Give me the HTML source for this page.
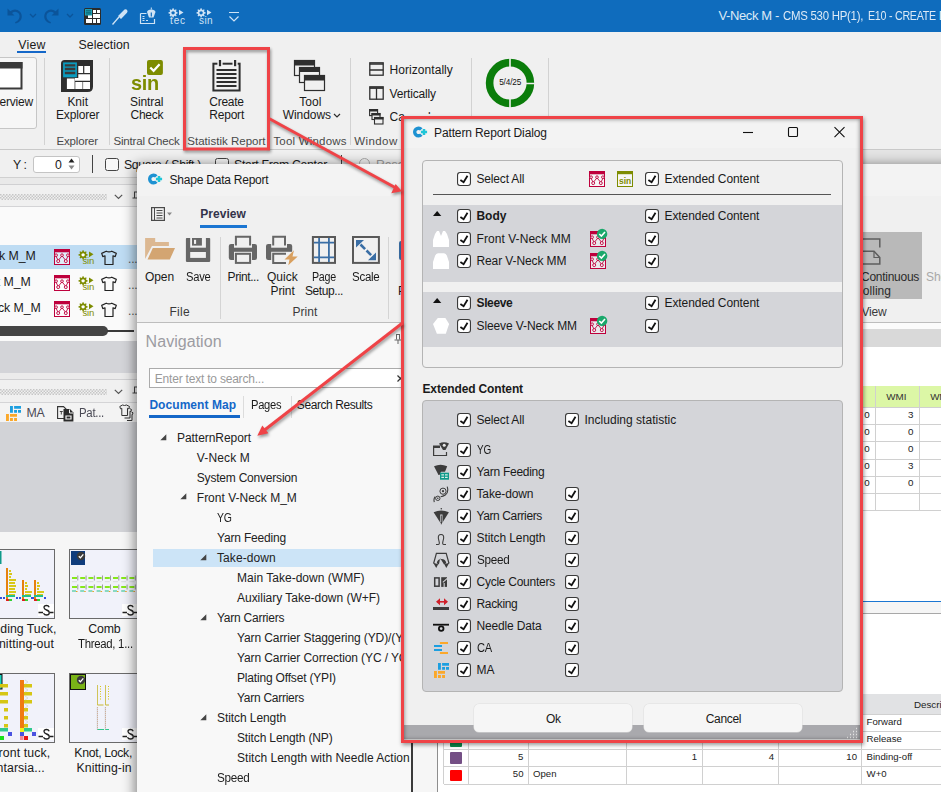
<!DOCTYPE html>
<html><head><meta charset="utf-8"><title>Pattern Report Dialog</title>
<style>
*{box-sizing:border-box;margin:0;padding:0}
html,body{width:941px;height:792px;overflow:hidden;background:#f0f0f0}
body{font-family:"Liberation Sans",sans-serif;font-size:12px;color:#1a1a1a;position:relative;letter-spacing:-0.1px}
.a{position:absolute}
.t{position:absolute;white-space:nowrap;line-height:1}
.c{text-align:center}
.r{text-align:right}
#app{position:absolute;left:0;top:0;width:941px;height:792px;overflow:hidden;background:#f0f0f0}
#sdr{position:absolute;left:137px;top:164px;width:820px;height:640px;background:#f0f0f0;border-radius:8px 0 0 0;box-shadow:-3px 0 12px rgba(0,0,0,.42)}
#sdri{position:absolute;left:0;top:0;width:820px;height:640px;overflow:hidden;border-radius:8px 0 0 0}
#dlg{position:absolute;left:401px;top:116px;width:462px;height:627px;background:#f0f0f0;border:3px solid #ef4347;overflow:hidden;box-shadow:1px 2px 4px rgba(0,0,0,.4)}
#dlg:after{content:'';position:absolute;left:0;top:0;right:0;bottom:0;box-shadow:inset 0 0 4px rgba(0,0,0,.5);pointer-events:none}
</style></head><body>
<svg width="0" height="0" style="position:absolute"><defs>
<symbol id="cb" viewBox="0 0 14 14"><rect x=".55" y=".55" width="12.900" height="12.900" rx="2.500" fill="#fff" stroke="#3a3a3a" stroke-width="1.100"/><path d="M3.400 7.900L6.600 10.200L10.500 3.700" fill="none" stroke="#111" stroke-width="1.800"/></symbol>
<symbol id="logo" viewBox="0 0 15 14"><path d="M8.320 3.460A3.800 3.800 0 1 0 8.320 8.540" fill="none" stroke="#1e92d2" stroke-width="3.400"/><path d="M11 2.900v6.200M7.900 6h6.200" stroke="#1fc6d8" stroke-width="2.500"/></symbol>
<symbol id="knit" viewBox="0 0 16 16"><rect x=".5" y=".5" width="15" height="15" fill="rgba(255,255,255,.5)" stroke="#be003c"/><rect x="0" y="0" width="16" height="3.300" fill="#be003c"/><path d="M1.800 6.800L4.200 11.500L8 6.800L11.800 11.500L14.200 6.800" fill="none" stroke="#be003c" stroke-width=".9"/><g fill="#f6eef0" stroke="#be003c" stroke-width=".9"><circle cx="2.100" cy="6.200" r="1.350"/><circle cx="8" cy="6.200" r="1.350"/><circle cx="13.900" cy="6.200" r="1.350"/><circle cx="4.200" cy="12.100" r="1.500"/><circle cx="11.800" cy="12.100" r="1.500"/></g></symbol>
<symbol id="ma" viewBox="0 0 17 17"><path d="M5 1h2.900v6.800H5zM9.100 1H16v2.800H9.100zM9.100 5H12v2.800H9.100zM13 5h3v2.800h-3z" fill="#1c9fe0"/><path d="M1 9h2.900v6.900H1zM5 9h7v2.700H5zM5 13h2.900v2.900H5zM9.100 13H12v2.900H9.100z" fill="#fba82a"/></symbol>
<symbol id="sinbox" viewBox="0 0 16 16"><rect x=".5" y=".5" width="15" height="15" fill="#f6f6f4" stroke="#7d8c00"/><rect x="0" y="0" width="16" height="3.2" fill="#7d8c00"/></symbol>

<symbol id="gearsin" viewBox="0 0 16 16"><g fill="#7d8c00"><path d="M4.6 0.3l1 0 .3 1.2 1 .4 1-.7.8.8-.7 1 .4 1 1.2.3v1.1l-1.2.3-.4 1 .7 1-.8.8-1-.7-1 .4-.3 1.2h-1l-.3-1.2-1-.4-1 .7-.8-.8.7-1-.4-1L.5 5.4V4.3l1.2-.3.4-1-.7-1 .8-.8 1 .7 1-.4z"/><path d="M11 1.5L15.5 4.3L11 7.2z"/></g><circle cx="5.1" cy="4.85" r="1.7" fill="#fff"/></symbol>
<symbol id="tshirt" viewBox="0 0 16 16"><path d="M5.2 1.2Q8 2.6 10.8 1.2L15.3 3.4L14.2 6.6L12 5.8V14.5H4V5.8L1.8 6.6L0.7 3.4z" fill="none" stroke="#222" stroke-width="1.2" stroke-linejoin="round"/></symbol>
<symbol id="slink" viewBox="0 0 16 12"><rect width="16" height="12" fill="#fff"/><path d="M0.5 8.5H5M12 8.5H15.5" stroke="#222" stroke-width="1.3" fill="none"/><path d="M11.2 3.2Q10.5 1.5 8.5 1.5Q6 1.5 6 3.6Q6 5.3 8.5 6Q11.3 6.8 11.3 8.8Q11.3 11 8.5 11Q6.3 11 5.5 9.2" stroke="#222" stroke-width="1.3" fill="none"/></symbol>

</defs></svg>
<div id="app">
<div class="a" style="left:0px;top:0px;width:941px;height:32px;background:#0f6cbd"></div>
<svg class="a" style="left:5px;top:7px;" width="18" height="18" viewBox="0 0 18 18"><path d="M2.5 1.5V8.5H9.5L7 6Q9.5 4.2 12 5.2Q15 6.6 14.5 10Q14 13.5 10 15.2L10.6 16.6Q16.5 14.5 16.8 10Q17 5 12.5 3Q8.5 1.8 5.3 4.3z" fill="#0b549a"/></svg>
<svg class="a" style="left:29px;top:13px;" width="8" height="6" viewBox="0 0 8 6"><path d="M1 1L4 4L7 1" fill="none" stroke="#0b549a" stroke-width="1.3"/></svg>
<svg class="a" style="left:43px;top:7px;" width="18" height="18" viewBox="0 0 18 18"><path d="M15.5 1.5V8.5H8.5L11 6Q8.500 4.2 6 5.2Q3 6.6 3.5 10Q4 13.5 8 15.2L7.400 16.6Q1.500 14.5 1.2 10Q1 5 5.500 3Q9.500 1.8 12.7 4.3z" fill="#0b549a"/></svg>
<svg class="a" style="left:66px;top:13px;" width="8" height="6" viewBox="0 0 8 6"><path d="M1 1L4 4L7 1" fill="none" stroke="#0b549a" stroke-width="1.3"/></svg>
<svg class="a" style="left:84px;top:8px;" width="17" height="17" viewBox="0 0 17 17"><rect width="17" height="17" rx="1.5" fill="#2b2b2b"/><path d="M9 2h3v3H9zM13 2h3v3h-3zM9 6h7v4H9zM2 11h6v4H2zM9 11h3v4H9zM13 11h3v4h-3zM4 7h4v3H4z" fill="#fff"/><rect x="1" y="1" width="7" height="6.5" fill="#1c9fb5"/><path d="M2 2.7h5M2 4.3h5M2 5.9h5" stroke="#0b5a68" stroke-width=".8"/></svg>
<svg class="a" style="left:111px;top:8px;" width="18" height="18" viewBox="0 0 18 18"><path d="M1.5 16.5L8 9" stroke="#cfe3f5" stroke-width="1.3"/><path d="M7 8L13.5 1.5Q15.5 1 16.2 2.2Q17 3.5 16 4.8L10 11z" fill="#cfe3f5"/></svg>
<svg class="a" style="left:139px;top:7px;" width="18" height="18" viewBox="0 0 18 18"><path d="M1.5 6.5H7.5M1.500 6.5V16.5H15.5V12" fill="none" stroke="#cfe3f5" stroke-width="1.2"/><path d="M3.5 9.5h2M3.5 11.5h2M3.5 13.500h2M7 13.5h2" stroke="#cfe3f5" stroke-width="1"/><path d="M8 5Q8.500 2.5 12.3 2.5Q16 2.5 16.5 5L14.500 10.500H10z" fill="#cfe3f5"/><path d="M12.3 0.500V2.5M12.300 6V9" stroke="#cfe3f5" stroke-width="1"/><path d="M12.3 5.500V9.500" stroke="#0f6cbd" stroke-width="1.2"/></svg>
<svg class="a" style="left:168px;top:8px;" width="18" height="18" viewBox="0 0 18 18"><path d="M4.6 0.3l1 0 .3 1.2 1 .4 1-.7.8.8-.7 1 .4 1 1.2.3v1.1l-1.2.3-.4 1 .7 1-.8.8-1-.7-1 .4-.3 1.2h-1l-.3-1.2-1-.4-1 .7-.8-.8.7-1-.4-1L.5 5.4V4.3l1.2-.3.4-1-.7-1 .8-.8 1 .7 1-.4z" fill="#cfe3f5"/><circle cx="5.1" cy="4.85" r="1.7" fill="#0f6cbd"/><path d="M11 1.8L15.500 4.5L11 7.200z" fill="#cfe3f5"/></svg>
<div class="t" style="left:170px;top:15.79px;letter-spacing:0.89px;color:#cfe3f5;font-size:10px;">tec</div>
<svg class="a" style="left:196px;top:8px;" width="18" height="18" viewBox="0 0 18 18"><path d="M4.6 0.3l1 0 .3 1.2 1 .4 1-.7.8.8-.7 1 .4 1 1.2.3v1.1l-1.2.3-.4 1 .7 1-.8.8-1-.7-1 .4-.3 1.2h-1l-.3-1.2-1-.4-1 .7-.8-.8.7-1-.4-1L.5 5.4V4.3l1.2-.3.4-1-.7-1 .8-.8 1 .7 1-.4z" fill="#cfe3f5"/><circle cx="5.1" cy="4.85" r="1.7" fill="#0f6cbd"/><path d="M11 1.8L15.500 4.5L11 7.200z" fill="#cfe3f5"/></svg>
<div class="t" style="left:199px;top:15.79px;letter-spacing:0.41px;color:#cfe3f5;font-size:10px;">sin</div>
<svg class="a" style="left:228px;top:11px;" width="12" height="12" viewBox="0 0 12 12"><path d="M1 1.500H11M1.500 5.500L6 10L10.500 5.500" fill="none" stroke="#cfe3f5" stroke-width="1.2"/></svg>
<div class="t" style="left:718.4px;top:9.25px;letter-spacing:-0.38px;color:#dce9f6;font-size:13px;">V-Neck M -</div>
<div class="t" style="left:782.5px;top:9.25px;letter-spacing:-0.30px;transform:scaleX(0.879);transform-origin:0 0;color:#dce9f6;font-size:13px;">CMS 530 HP(1),</div>
<div class="t" style="left:867.7px;top:9.25px;letter-spacing:-0.30px;transform:scaleX(0.820);transform-origin:0 0;color:#dce9f6;font-size:13px;">E10 - CREATE</div>
<div class="t" style="left:938.7px;top:9.25px;color:#dce9f6;font-size:13px;">D</div>
<div class="t" style="left:18.3px;top:38.84px;letter-spacing:0.24px;font-size:12.3px;">View</div>
<div class="a" style="left:17px;top:51px;width:29px;height:2px;background:#1467c8"></div>
<div class="t" style="left:78.6px;top:38.84px;letter-spacing:0.06px;font-size:12.3px;">Selection</div>
<div class="a" style="left:0px;top:149px;width:941px;height:1px;background:#c9c9c9"></div>
<div class="a" style="left:-5px;top:57px;width:42px;height:71.5px;border:1px solid #c6c6c6;border-radius:3px;background:#f6f6f6"></div>
<svg class="a" style="left:0px;top:62px;" width="23" height="28" viewBox="0 0 23 28"><path d="M-2 1H21.500V26.500H-2" fill="#fff" stroke="#3a3a3a" stroke-width="2"/><rect x="-2" y="0" width="24.500" height="6.500" fill="#3a3a3a"/></svg>
<div class="t" style="left:-6.37px;top:96.09px;letter-spacing:-0.2px">verview</div>
<div class="a" style="left:44px;top:58px;width:1px;height:87px;background:#d2d2d2"></div>
<div class="a" style="left:109px;top:58px;width:1px;height:87px;background:#d2d2d2"></div>
<div class="a" style="left:350px;top:58px;width:1px;height:87px;background:#d2d2d2"></div>
<div class="a" style="left:471px;top:58px;width:1px;height:87px;background:#d2d2d2"></div>
<div class="a" style="left:548px;top:58px;width:1px;height:87px;background:#d2d2d2"></div>
<svg class="a" style="left:61px;top:59.8px;" width="32" height="32" viewBox="0 0 32 32"><path d="M3.500 0H32V26.500Q32 32 26.500 32H0V3.500Q0 0 3.500 0z" fill="#2e2e2e"/><path d="M17.300 6h4.800v6.900h-4.800zM23.300 6h5.700v6.900h-5.700zM17.300 14.200H29v6.500H13.900V18h3.400zM5.900 18.400h7.700V29H5.900zM14.300 22.100h7.200V29h-7.200zM22.100 22.100H29V29h-6.900z" fill="#fff"/><rect x="2.100" y="2.400" width="13.800" height="14.900" fill="#0b9cc0"/><path d="M3.800 5.300h10.500M3.800 9h10.500M3.800 13h10.500" stroke="#3a3a3a" stroke-width="2.300"/></svg>
<div class="t" style="left:67.4px;top:96.09px;letter-spacing:-0.02px;">Knit</div>
<div class="t" style="left:56px;top:109.09px;letter-spacing:-0.16px;">Explorer</div>
<div class="t" style="left:56.5px;top:135.52px;letter-spacing:-0.17px;color:#484848;font-size:11.5px;">Explorer</div>
<svg class="a" style="left:147.4px;top:59.8px;" width="16" height="15" viewBox="0 0 16 15"><rect width="15.900" height="15" rx="2" fill="#7d8c00"/><path d="M3.300 7.500L6.600 10.800L12.600 4.200" fill="none" stroke="#fff" stroke-width="2.200"/></svg>
<div class="t" style="left:131.2px;top:72.47px;letter-spacing:-0.30px;transform:scaleX(0.948);transform-origin:0 0;font-weight:bold;color:#7d8c00;font-size:21px;">sin</div>
<div class="t" style="left:130px;top:96.09px;letter-spacing:-0.10px;">Sintral</div>
<div class="t" style="left:130.5px;top:109.09px;letter-spacing:-0.24px;">Check</div>
<div class="t" style="left:113.5px;top:135.52px;letter-spacing:-0.18px;color:#484848;font-size:11.5px;">Sintral Check</div>
<svg class="a" style="left:212px;top:59px;" width="30" height="34" viewBox="0 0 30 34"><rect x="1.400" y="4.700" width="26.200" height="26.800" fill="none" stroke="#2e2e2e" stroke-width="2"/><path d="M4.500 10.900H24.500M4.500 14.900H24.500M4.500 19H24.500M4.500 23H24.500M4.500 27H24.500" stroke="#2e2e2e" stroke-width="2"/><rect x="5.400" y="0" width="5.200" height="8.200" fill="#f0f0f0"/><rect x="20.500" y="0" width="5.200" height="8.200" fill="#f0f0f0"/><rect x="6.900" y="1" width="2.200" height="6.200" fill="#2e2e2e"/><rect x="22" y="1" width="2.200" height="6.200" fill="#2e2e2e"/></svg>
<div class="t" style="left:209.3px;top:96.09px;letter-spacing:-0.29px;">Create</div>
<div class="t" style="left:209.3px;top:109.09px;letter-spacing:-0.22px;">Report</div>
<div class="t" style="left:187.3px;top:135.52px;letter-spacing:0.02px;color:#484848;font-size:11.5px;">Statistik Report</div>
<svg class="a" style="left:293px;top:59px;" width="34" height="34" viewBox="0 0 34 34"><g stroke="#2e2e2e" stroke-width="1.200" fill="#f0f0f0"><rect x="1.500" y="1.500" width="20" height="15"/><rect x="6.500" y="8.500" width="20" height="15"/><rect x="11.500" y="16.500" width="20" height="15"/></g><path d="M1 1h21v5.500H1zM6 8h21v5H6zM11 16h21v5.500H11z" fill="#2e2e2e"/></svg>
<div class="t" style="left:299.3px;top:96.09px;letter-spacing:-0.00px;">Tool</div>
<div class="t" style="left:282.7px;top:109.09px;letter-spacing:-0.05px;">Windows</div>
<svg class="a" style="left:333px;top:113px;" width="8" height="6" viewBox="0 0 8 6"><path d="M1 1L4 4L7 1" fill="none" stroke="#2e2e2e" stroke-width="1.200"/></svg>
<div class="t" style="left:273.4px;top:135.52px;letter-spacing:0.20px;color:#484848;font-size:11.5px;">Tool Windows</div>
<svg class="a" style="left:369px;top:62px;" width="15" height="15" viewBox="0 0 15 15"><rect x=".8" y=".8" width="13.400" height="12.400" fill="none" stroke="#2e2e2e" stroke-width="1.300"/><path d="M.8 2h13.400M.8 8h13.400" stroke="#2e2e2e" stroke-width="1.500"/></svg>
<div class="t" style="left:389.6px;top:64.09px;letter-spacing:0.05px;">Horizontally</div>
<svg class="a" style="left:369px;top:86px;" width="15" height="15" viewBox="0 0 15 15"><rect x=".8" y=".8" width="13.400" height="12.400" fill="none" stroke="#2e2e2e" stroke-width="1.300"/><path d="M.8 2h13.400" stroke="#2e2e2e" stroke-width="1.800"/><path d="M7.500 2V13.500" stroke="#2e2e2e" stroke-width="1.300"/></svg>
<div class="t" style="left:389.6px;top:88.09px;letter-spacing:-0.17px;">Vertically</div>
<svg class="a" style="left:369px;top:109px;" width="15" height="17" viewBox="0 0 15 17"><g stroke="#2e2e2e" stroke-width="1.100" fill="#f0f0f0"><rect x=".6" y=".6" width="8" height="6"/><rect x="3" y="4.500" width="8" height="6"/><rect x="5.500" y="8.500" width="8.500" height="6.500"/></g><path d="M0 0h9v2.500H0zM2.500 4h9v2.500h-9zM5 8h9.500v2.500H5z" fill="#2e2e2e"/></svg>
<div class="t" style="left:389.6px;top:111.09px;letter-spacing:0.1px;clip-path:polygon(0 0,100% 0,100% 2.9px,15.5px 2.9px,15.5px 100%,0 100%)">Cascade</div>
<div class="t" style="left:354.3px;top:135.52px;letter-spacing:0.40px;color:#484848;font-size:11.5px;">Window</div>
<svg class="a" style="left:485px;top:58px;" width="50" height="50" viewBox="0 0 50 50"><circle cx="25" cy="25" r="20.400" fill="none" stroke="#0b7d0b" stroke-width="7.600"/><path d="M25 0V10M25 40V50M40 25.500H50" stroke="#f0f0f0" stroke-width="1.600"/></svg>
<div class="t" style="left:499.2px;top:79.31px;letter-spacing:-0.12px;color:#111;font-size:8.2px;">5/4/25</div>
<div class="a" style="left:0px;top:150px;width:941px;height:28px;background:#f0f0f0"></div>
<div class="a" style="left:863px;top:150px;width:80px;height:14px;background:#e4e4e4"></div>
<div class="a" style="left:0px;top:177px;width:941px;height:1px;background:#d0d0d0"></div>
<div class="t" style="left:13px;top:158.84px;letter-spacing:-0.44px;font-size:12.3px;">Y :</div>
<div class="a" style="left:32.5px;top:155.5px;width:47px;height:17px;background:#fff;border:1px solid #c4c4c4;border-radius:3px"></div>
<div class="t" style="left:55px;top:158.84px;font-size:12.3px;">0</div>
<svg class="a" style="left:68px;top:158px;" width="7" height="12" viewBox="0 0 7 12"><path d="M3.500 0.500L6.500 4.500H.5z" fill="#222"/><path d="M3.500 11.500L6.500 7.500H.5z" fill="#8a8a8a"/></svg>
<div class="a" style="left:92px;top:155px;width:1px;height:18px;background:#444"></div>
<div class="a" style="left:105px;top:157.5px;width:14px;height:13.5px;background:#f7f7f7;border:1px solid #444;border-radius:2.500px"></div>
<div class="t" style="left:124px;top:158.84px;letter-spacing:-0.36px;font-size:12.3px;">Square ( Shift )</div>
<div class="a" style="left:215px;top:157.5px;width:14px;height:13.5px;background:#f7f7f7;border:1px solid #444;border-radius:2.500px"></div>
<div class="t" style="left:234px;top:158.84px;letter-spacing:-0.32px;font-size:12.3px;">Start From Center</div>
<div class="a" style="left:341px;top:155px;width:1px;height:18px;background:#444"></div>
<div class="a" style="left:359px;top:158px;width:11px;height:11px;border:1px solid #aaa;border-radius:6px"></div>
<div class="t" style="left:376px;top:158.84px;color:#9a9a9a;font-size:12.3px;">Reset</div>
<div class="a" style="left:0px;top:178px;width:137px;height:7px;background:#e9e9e9"></div>
<div class="a" style="left:0px;top:184px;width:137px;height:1px;background:#d0d0d2"></div>
<div class="a" style="left:0px;top:185px;width:137px;height:22px;background:#f0f0f0"></div>
<div class="a" style="left:0px;top:206px;width:137px;height:1px;background:#d4d4d6"></div>
<svg class="a" style="left:0px;top:194px;" width="107" height="6" viewBox="0 0 107 6"><defs><pattern id="dots" width="3" height="3" patternUnits="userSpaceOnUse"><rect x="0" y="0" width="1.500" height="1.500" fill="#c6c6c6"/></pattern><pattern id="dots2" width="3" height="3" patternUnits="userSpaceOnUse"><rect x="1.500" y="1.500" width="1.500" height="1.500" fill="#c6c6c6"/></pattern></defs><rect width="107" height="6" fill="url(#dots)"/><rect width="107" height="6" fill="url(#dots2)"/></svg>
<svg class="a" style="left:114px;top:194px;" width="9" height="6" viewBox="0 0 9 6"><path d="M0.800 0.800L4.500 4.500L8.200 0.800" fill="none" stroke="#555" stroke-width="1.200"/></svg>
<svg class="a" style="left:132px;top:191px;" width="6" height="12" viewBox="0 0 6 12"><path d="M2 1H6M2.500 1V7M0.500 7H6" fill="none" stroke="#444" stroke-width="1"/></svg>
<div class="a" style="left:0px;top:207px;width:137px;height:134px;background:#fafafa"></div>
<div class="a" style="left:0px;top:245px;width:137px;height:24px;background:#bedcf3"></div>
<div class="t" style="left:-1.0px;top:249.84px;font-size:12.3px;letter-spacing:-0.05px">k M_M</div>
<svg class="a" style="left:54px;top:249px;" width="16" height="16" viewBox="0 0 16 16"><use href="#knit"/></svg>
<svg class="a" style="left:78px;top:250px;" width="16" height="16" viewBox="0 0 16 16"><use href="#gearsin"/></svg>
<div class="t" style="left:82.5px;top:256.21px;letter-spacing:-0.15px;color:#7d8c00;font-size:9.5px;">sin</div>
<svg class="a" style="left:101px;top:250px;" width="16" height="16" viewBox="0 0 16 16"><use href="#tshirt"/></svg>
<div class="t" style="left:128px;top:253.09px;letter-spacing:-0.17px;color:#555;">...</div>
<div class="t" style="left:-3.27px;top:275.84px;font-size:12.3px;letter-spacing:-0.05px">t M_M</div>
<svg class="a" style="left:54px;top:275px;" width="16" height="16" viewBox="0 0 16 16"><use href="#knit"/></svg>
<svg class="a" style="left:78px;top:276px;" width="16" height="16" viewBox="0 0 16 16"><use href="#gearsin"/></svg>
<div class="t" style="left:82.5px;top:282.21px;letter-spacing:-0.15px;color:#7d8c00;font-size:9.5px;">sin</div>
<svg class="a" style="left:101px;top:276px;" width="16" height="16" viewBox="0 0 16 16"><use href="#tshirt"/></svg>
<div class="t" style="left:128px;top:279.09px;letter-spacing:-0.17px;color:#555;">...</div>
<div class="t" style="left:-2.05px;top:301.84px;font-size:12.3px;letter-spacing:-0.05px">ck M_M</div>
<svg class="a" style="left:54px;top:301px;" width="16" height="16" viewBox="0 0 16 16"><use href="#knit"/></svg>
<svg class="a" style="left:78px;top:302px;" width="16" height="16" viewBox="0 0 16 16"><use href="#gearsin"/></svg>
<div class="t" style="left:82.5px;top:308.21px;letter-spacing:-0.15px;color:#7d8c00;font-size:9.5px;">sin</div>
<svg class="a" style="left:101px;top:302px;" width="16" height="16" viewBox="0 0 16 16"><use href="#tshirt"/></svg>
<div class="t" style="left:128px;top:305.09px;letter-spacing:-0.17px;color:#555;">...</div>
<div class="a" style="left:-6px;top:326px;width:114px;height:10px;background:#444;border-radius:5px"></div>
<div class="a" style="left:107px;top:330.3px;width:27px;height:1.6px;background:#3a3a3a"></div>
<div class="a" style="left:0px;top:341px;width:137px;height:33px;background:#d3d4d8"></div>
<div class="a" style="left:0px;top:373px;width:137px;height:7px;background:#ebebeb"></div>
<div class="a" style="left:0px;top:379px;width:137px;height:1px;background:#d0d0d2"></div>
<div class="a" style="left:0px;top:380px;width:137px;height:22px;background:#f0f0f0"></div>
<div class="a" style="left:0px;top:402px;width:137px;height:1px;background:#d4d4d6"></div>
<svg class="a" style="left:0px;top:389px;" width="107" height="6" viewBox="0 0 107 6"><rect width="107" height="6" fill="url(#dots)"/><rect width="107" height="6" fill="url(#dots2)"/></svg>
<svg class="a" style="left:114px;top:389px;" width="9" height="6" viewBox="0 0 9 6"><path d="M0.800 0.800L4.500 4.500L8.200 0.800" fill="none" stroke="#555" stroke-width="1.200"/></svg>
<svg class="a" style="left:132px;top:386px;" width="6" height="12" viewBox="0 0 6 12"><path d="M2 1H6M2.500 1V7M0.500 7H6" fill="none" stroke="#444" stroke-width="1"/></svg>
<div class="a" style="left:0px;top:403px;width:137px;height:19px;background:#f3f3f3"></div>
<svg class="a" style="left:5px;top:404.5px;" width="17" height="17" viewBox="0 0 17 17"><use href="#ma"/></svg>
<div class="t" style="left:26.4px;top:406.84px;letter-spacing:-0.03px;color:#4a4a55;font-size:12.3px;">MA</div>
<svg class="a" style="left:57px;top:405px;" width="17" height="17" viewBox="0 0 17 17"><path d="M0.600 1.600H6.500L9 4V13.500H0.600z" fill="#f3f3f3" stroke="#333" stroke-width="1.100"/><path d="M2.800 6.500h3M4.300 6.500v3" stroke="#333" stroke-width=".9"/><path d="M6.500 4H13L16.400 7.400V16.500H6.500z" fill="#2b2b2b"/><path d="M12.500 4.500V8H16" fill="none" stroke="#f3f3f3" stroke-width="1"/><path d="M9 11h5v3H9z" fill="none" stroke="#f3f3f3" stroke-width="1.200"/></svg>
<div class="t" style="left:78.6px;top:406.84px;letter-spacing:-0.30px;transform:scaleX(0.929);transform-origin:0 0;color:#4a4a55;font-size:12.3px;">Pat...</div>
<svg class="a" style="left:119px;top:404px;" width="16" height="18" viewBox="0 0 16 18"><path d="M3.500 1Q5.500 2 7.500 1L10.500 2.500L9.800 4.800L8.500 4.300V11.500H2.800V4.300L1.500 4.800L0.800 2.500z" fill="#f3f3f3" stroke="#333" stroke-width="1"/><path d="M10.500 4.500L12.500 5.500L12 7.500L11 7.200V14H5.500M12.500 8L14 8.800L13.500 10.500L13 10.300V16.500H8" fill="none" stroke="#333" stroke-width="1"/></svg>
<div class="a" style="left:0px;top:422px;width:137px;height:110px;background:#d2d3d7"></div>
<div class="a" style="left:0px;top:532px;width:137px;height:260px;background:#f6f6f6"></div>
<div class="a" style="left:-15px;top:549px;width:70px;height:70px;background:#f1f2fa;border:1px solid #6a6a6a"></div>
<div class="a" style="left:69px;top:549px;width:70px;height:70px;background:#f1f2fa;border:1px solid #6a6a6a"></div>
<div class="a" style="left:-15px;top:673px;width:70px;height:70px;background:#f1f2fa;border:1px solid #6a6a6a"></div>
<div class="a" style="left:69px;top:673px;width:70px;height:70px;background:#f1f2fa;border:1px solid #6a6a6a"></div>
<svg class="a" style="left:0px;top:540px;" width="56" height="80" viewBox="0 540 56 80"><rect x="6" y="568" width="2" height="31" fill="#e6820e"/><rect x="9" y="570" width="2" height="2" fill="#d8c81a"/><rect x="9" y="573" width="3" height="2" fill="#d8c81a"/><rect x="9" y="576" width="2" height="2" fill="#d8c81a"/><rect x="9" y="579" width="7" height="2" fill="#d8c81a"/><rect x="9" y="582" width="6" height="2" fill="#d8c81a"/><rect x="9" y="585" width="7" height="2" fill="#d8c81a"/><rect x="9" y="588" width="6" height="2" fill="#d8c81a"/><rect x="9" y="591" width="7" height="2" fill="#d8c81a"/><rect x="9" y="594" width="6" height="2" fill="#d8c81a"/><rect x="6" y="595" width="9" height="2" fill="#22c08a"/><rect x="6" y="599" width="3" height="2" fill="#e02020"/><rect x="9" y="599" width="3" height="2" fill="#30d030"/><rect x="16" y="597" width="2" height="2" fill="#3050e0"/><rect x="3" y="597" width="2" height="2" fill="#3050e0"/><rect x="22" y="580" width="2" height="19" fill="#e6820e"/><rect x="25" y="582" width="2" height="2" fill="#d8c81a"/><rect x="25" y="585" width="3" height="2" fill="#d8c81a"/><rect x="25" y="588" width="2" height="2" fill="#d8c81a"/><rect x="25" y="591" width="7" height="2" fill="#d8c81a"/><rect x="25" y="594" width="6" height="2" fill="#d8c81a"/><rect x="22" y="595" width="9" height="2" fill="#22c08a"/><rect x="22" y="599" width="3" height="2" fill="#e02020"/><rect x="25" y="599" width="3" height="2" fill="#30d030"/><rect x="32" y="597" width="2" height="2" fill="#3050e0"/><rect x="19" y="597" width="2" height="2" fill="#3050e0"/><rect x="34" y="580" width="2" height="19" fill="#e6820e"/><rect x="37" y="582" width="2" height="2" fill="#d8c81a"/><rect x="37" y="585" width="3" height="2" fill="#d8c81a"/><rect x="37" y="588" width="2" height="2" fill="#d8c81a"/><rect x="37" y="591" width="7" height="2" fill="#d8c81a"/><rect x="37" y="594" width="6" height="2" fill="#d8c81a"/><rect x="34" y="595" width="9" height="2" fill="#22c08a"/><rect x="34" y="599" width="3" height="2" fill="#e02020"/><rect x="37" y="599" width="3" height="2" fill="#30d030"/><rect x="44" y="597" width="2" height="2" fill="#3050e0"/><rect x="31" y="597" width="2" height="2" fill="#3050e0"/><rect x="0" y="551" width="1.500" height="13" fill="#0f9a8a"/><rect x="0" y="597" width="2" height="2" fill="#3050e0"/></svg>
<svg class="a" style="left:38px;top:604px;" width="16" height="12" viewBox="0 0 16 12"><use href="#slink"/></svg>
<div class="a" style="left:71px;top:551px;width:14px;height:14px;background:#0f3c7c"></div>
<svg class="a" style="left:76px;top:551px;" width="10" height="10" viewBox="0 0 10 10"><circle cx="5" cy="5" r="4.200" fill="#3a3a3a"/><path d="M2.800 5.200L4.400 6.800L7.300 3.300" fill="none" stroke="#fff" stroke-width="1.300"/></svg>
<svg class="a" style="left:70px;top:570px;" width="67" height="30" viewBox="70 570 67 30"><rect x="72.0" y="577" width="5" height="2" fill="#86e81a"/><rect x="77.5" y="575.500" width=".7" height="5" fill="#777"/><rect x="72.0" y="586" width="5" height="2" fill="#86e81a"/><rect x="77.5" y="584.500" width=".7" height="5" fill="#777"/><rect x="72.0" y="590.500" width="4" height="1" fill="#22c08a"/><rect x="76.0" y="591" width="1.500" height="1" fill="#e8a020"/><rect x="72.0" y="581.500" width="5" height=".6" fill="#ccc"/><rect x="80.2" y="577" width="5" height="2" fill="#86e81a"/><rect x="85.7" y="575.500" width=".7" height="5" fill="#777"/><rect x="80.2" y="586" width="5" height="2" fill="#86e81a"/><rect x="85.7" y="584.500" width=".7" height="5" fill="#777"/><rect x="80.2" y="590.500" width="4" height="1" fill="#22c08a"/><rect x="84.2" y="591" width="1.500" height="1" fill="#e8a020"/><rect x="80.2" y="581.500" width="5" height=".6" fill="#ccc"/><rect x="88.4" y="577" width="5" height="2" fill="#86e81a"/><rect x="93.9" y="575.500" width=".7" height="5" fill="#777"/><rect x="88.4" y="586" width="5" height="2" fill="#86e81a"/><rect x="93.9" y="584.500" width=".7" height="5" fill="#777"/><rect x="88.4" y="590.500" width="4" height="1" fill="#22c08a"/><rect x="92.4" y="591" width="1.500" height="1" fill="#e8a020"/><rect x="88.4" y="581.500" width="5" height=".6" fill="#ccc"/><rect x="96.6" y="577" width="5" height="2" fill="#86e81a"/><rect x="102.1" y="575.500" width=".7" height="5" fill="#777"/><rect x="96.6" y="586" width="5" height="2" fill="#86e81a"/><rect x="102.1" y="584.500" width=".7" height="5" fill="#777"/><rect x="96.6" y="590.500" width="4" height="1" fill="#22c08a"/><rect x="100.6" y="591" width="1.500" height="1" fill="#e8a020"/><rect x="96.6" y="581.500" width="5" height=".6" fill="#ccc"/><rect x="104.8" y="577" width="5" height="2" fill="#86e81a"/><rect x="110.3" y="575.500" width=".7" height="5" fill="#777"/><rect x="104.8" y="586" width="5" height="2" fill="#86e81a"/><rect x="110.3" y="584.500" width=".7" height="5" fill="#777"/><rect x="104.8" y="590.500" width="4" height="1" fill="#22c08a"/><rect x="108.8" y="591" width="1.500" height="1" fill="#e8a020"/><rect x="104.8" y="581.500" width="5" height=".6" fill="#ccc"/><rect x="113.0" y="577" width="5" height="2" fill="#86e81a"/><rect x="118.5" y="575.500" width=".7" height="5" fill="#777"/><rect x="113.0" y="586" width="5" height="2" fill="#86e81a"/><rect x="118.5" y="584.500" width=".7" height="5" fill="#777"/><rect x="113.0" y="590.500" width="4" height="1" fill="#22c08a"/><rect x="117.0" y="591" width="1.500" height="1" fill="#e8a020"/><rect x="113.0" y="581.500" width="5" height=".6" fill="#ccc"/><rect x="121.19999999999999" y="577" width="5" height="2" fill="#86e81a"/><rect x="126.69999999999999" y="575.500" width=".7" height="5" fill="#777"/><rect x="121.19999999999999" y="586" width="5" height="2" fill="#86e81a"/><rect x="126.69999999999999" y="584.500" width=".7" height="5" fill="#777"/><rect x="121.19999999999999" y="590.500" width="4" height="1" fill="#22c08a"/><rect x="125.19999999999999" y="591" width="1.500" height="1" fill="#e8a020"/><rect x="121.19999999999999" y="581.500" width="5" height=".6" fill="#ccc"/><rect x="129.39999999999998" y="577" width="5" height="2" fill="#86e81a"/><rect x="134.89999999999998" y="575.500" width=".7" height="5" fill="#777"/><rect x="129.39999999999998" y="586" width="5" height="2" fill="#86e81a"/><rect x="134.89999999999998" y="584.500" width=".7" height="5" fill="#777"/><rect x="129.39999999999998" y="590.500" width="4" height="1" fill="#22c08a"/><rect x="133.39999999999998" y="591" width="1.500" height="1" fill="#e8a020"/><rect x="129.39999999999998" y="581.500" width="5" height=".6" fill="#ccc"/><rect x="137.6" y="577" width="5" height="2" fill="#86e81a"/><rect x="143.1" y="575.500" width=".7" height="5" fill="#777"/><rect x="137.6" y="586" width="5" height="2" fill="#86e81a"/><rect x="143.1" y="584.500" width=".7" height="5" fill="#777"/><rect x="137.6" y="590.500" width="4" height="1" fill="#22c08a"/><rect x="141.6" y="591" width="1.500" height="1" fill="#e8a020"/><rect x="137.6" y="581.500" width="5" height=".6" fill="#ccc"/></svg>
<svg class="a" style="left:122px;top:604px;" width="16" height="12" viewBox="0 0 16 12"><use href="#slink"/></svg>
<div class="t" style="left:-6.51px;top:622.84px;font-size:12.3px;letter-spacing:0">nding Tuck,</div>
<div class="t" style="left:-1.12px;top:637.84px;font-size:12.3px;letter-spacing:0.1px">nitting-out</div>
<div class="t" style="left:88.3px;top:622.84px;letter-spacing:-0.13px;font-size:12.3px;">Comb</div>
<div class="t" style="left:77.6px;top:637.84px;letter-spacing:-0.30px;transform:scaleX(0.924);transform-origin:0 0;font-size:12.3px;">Thread, 1...</div>
<div class="t" style="left:-9.0px;top:746.84px;font-size:12.3px;letter-spacing:0.1px">Front tuck,</div>
<div class="t" style="left:-6.99px;top:761.84px;font-size:12.3px;letter-spacing:0.1px">Intarsia...</div>
<div class="t" style="left:74.3px;top:746.84px;letter-spacing:-0.35px;font-size:12.3px;">Knot, Lock,</div>
<div class="t" style="left:76.6px;top:761.84px;letter-spacing:0.02px;font-size:12.3px;">Knitting-in</div>
<svg class="a" style="left:0px;top:674px;" width="54" height="68" viewBox="0 674 54 68"><rect x="-1" y="674.500" width="3" height="14.500" fill="#19d6c2" stroke="#111" stroke-width="1"/><rect x="20" y="680" width="4" height="48" fill="#f07a12"/><rect x="24" y="684" width="8" height="3.500" fill="#d6c614"/><rect x="24" y="692" width="8" height="3.500" fill="#d6c614"/><rect x="24" y="700" width="8" height="3.500" fill="#d6c614"/><rect x="24" y="708" width="4" height="3.500" fill="#d6c614"/><rect x="24" y="716" width="4" height="3.500" fill="#d6c614"/><rect x="24" y="724" width="4" height="3.500" fill="#d6c614"/><path d="M25 680l3 2l-3 2" fill="none" stroke="#c9c9c9" stroke-width=".6"/><path d="M25 688l3 2l-3 2" fill="none" stroke="#c9c9c9" stroke-width=".6"/><path d="M25 696l3 2l-3 2" fill="none" stroke="#c9c9c9" stroke-width=".6"/><path d="M25 704l3 2l-3 2" fill="none" stroke="#c9c9c9" stroke-width=".6"/><path d="M25 712l3 2l-3 2" fill="none" stroke="#c9c9c9" stroke-width=".6"/><path d="M25 720l3 2l-3 2" fill="none" stroke="#c9c9c9" stroke-width=".6"/><rect x="20" y="728" width="4" height="4" fill="#f2f21a"/><rect x="24" y="728" width="8" height="3.500" fill="#2fc98e"/><rect x="20" y="732" width="4" height="4" fill="#4a52e0"/><rect x="32" y="732" width="4" height="4" fill="#4a52e0"/><rect x="0" y="684" width="8" height="3.500" fill="#d6c614"/><rect x="0" y="692" width="8" height="3.500" fill="#d6c614"/><rect x="0" y="700" width="8" height="3.500" fill="#d6c614"/><rect x="4" y="708" width="4" height="3.500" fill="#d6c614"/><rect x="4" y="716" width="4" height="3.500" fill="#d6c614"/><rect x="4" y="724" width="4" height="3.500" fill="#d6c614"/><rect x="0" y="728" width="8" height="3.500" fill="#2fc98e"/><rect x="8" y="732" width="4" height="4" fill="#4a52e0"/><rect x="0" y="736" width="4" height="4" fill="#18e018"/><rect x="20" y="736" width="3.500" height="4" fill="#f08a9a"/><rect x="24" y="736" width="4" height="4" fill="#e81616"/></svg>
<svg class="a" style="left:38px;top:728px;" width="16" height="12" viewBox="0 0 16 12"><use href="#slink"/></svg>
<div class="a" style="left:70px;top:674px;width:16px;height:16px;background:#7ab317;border:1px solid #111"></div>
<svg class="a" style="left:75.5px;top:675px;" width="10" height="10" viewBox="0 0 10 10"><circle cx="5" cy="5" r="4.200" fill="#3a3a3a"/><path d="M2.800 5.200L4.400 6.800L7.300 3.300" fill="none" stroke="#fff" stroke-width="1.300"/></svg>
<svg class="a" style="left:90px;top:680px;" width="30" height="56" viewBox="90 680 30 56"><path d="M97.5 685V705" stroke="#c8b830" stroke-width=".8"/><path d="M97.5 707V730" stroke="#e8a070" stroke-width=".8" stroke-dasharray="1 1"/><path d="M97.3 707V730" stroke="#aaa" stroke-width=".5"/><path d="M100.5 686V701" stroke="#d6c614" stroke-width="1" stroke-dasharray="1 1.500"/><path d="M105.5 685V705" stroke="#c8b830" stroke-width=".8"/><path d="M105.5 707V730" stroke="#e8a070" stroke-width=".8" stroke-dasharray="1 1"/><path d="M105.3 707V730" stroke="#aaa" stroke-width=".5"/><path d="M108.5 686V701" stroke="#d6c614" stroke-width="1" stroke-dasharray="1 1.500"/><path d="M97.500 705h6M105.500 705h3.500" stroke="#c8b830" stroke-width="1"/><path d="M97.500 729.500h6.500M105.500 729.500h3.500" stroke="#2fc98e" stroke-width="1.200"/></svg>
<svg class="a" style="left:122px;top:728px;" width="16" height="12" viewBox="0 0 16 12"><use href="#slink"/></svg>
</div>
<div id="sdr"><div id="sdri">
<div class="a" style="left:0px;top:0px;width:820px;height:32px;background:#f3f3f3"></div>
<svg class="a" style="left:11px;top:9px;" width="15" height="14" viewBox="0 0 15 14"><use href="#logo"/></svg>
<div class="t" style="left:32.6px;top:10.09px;letter-spacing:-0.23px;">Shape Data Report</div>
<svg class="a" style="left:14px;top:42px;" width="22" height="16" viewBox="0 0 22 16"><rect x=".6" y="1.600" width="12.800" height="12.800" fill="none" stroke="#4a4a4a" stroke-width="1.200"/><path d="M3.500 1.500V14.500" stroke="#4a4a4a" stroke-width="1"/><path d="M5.500 4.500h6M5.500 7h6M5.500 9.500h6M5.500 12h6" stroke="#4a4a4a" stroke-width="1"/><path d="M16 6.500h5L18.500 9.500z" fill="#888"/></svg>
<div class="t" style="left:63.3px;top:44.09px;letter-spacing:0.03px;font-weight:bold;color:#33334a;">Preview</div>
<div class="a" style="left:63px;top:61px;width:46.5px;height:3px;background:#1b76d2"></div>
<svg class="a" style="left:7px;top:74px;" width="32" height="23" viewBox="0 0 32 23"><path d="M1.100 0.100H11.200V4H24.900V8H8L1.100 21z" fill="#dcb892"/><path d="M8.800 10H31L25.800 21.600H3.500z" fill="#d3a572"/></svg>
<div class="t" style="left:8px;top:107.09px;letter-spacing:-0.09px;">Open</div>
<svg class="a" style="left:48px;top:74px;" width="26" height="24" viewBox="0 0 26 24"><rect x=".9" y="0" width="24.300" height="23.900" rx=".8" fill="#666"/><rect x="5.200" y="-1" width="15.700" height="10.700" fill="#f0f0f0"/><rect x="7" y="0" width="9.900" height="7.600" fill="#666"/><rect x="9" y="1.800" width="2.100" height="4.100" fill="#f0f0f0"/><rect x="5.200" y="14" width="15.700" height="5.900" fill="#f0f0f0"/></svg>
<div class="t" style="left:49px;top:107.09px;letter-spacing:-0.30px;transform:scaleX(0.933);transform-origin:0 0;">Save</div>
<div class="a" style="left:83px;top:73px;width:1px;height:82px;background:#d4d4d4"></div>
<div class="a" style="left:251px;top:73px;width:1px;height:82px;background:#d4d4d4"></div>
<svg class="a" style="left:91px;top:71px;" width="30" height="30" viewBox="0 0 30 30"><rect x=".8" y="8.900" width="28.200" height="16.100" rx="2.200" fill="#666"/><rect x="6" y="0" width="18" height="12.700" fill="#f0f0f0"/><path d="M7.900 10.600V1.800H22.100V10.600" fill="none" stroke="#666" stroke-width="2"/><rect x="6" y="16.800" width="18" height="13.200" fill="#f0f0f0"/><rect x="7.900" y="18.800" width="14.200" height="9.100" fill="none" stroke="#666" stroke-width="2"/></svg>
<div class="t" style="left:90.6px;top:107.09px;letter-spacing:-0.42px;">Print...</div>
<svg class="a" style="left:128px;top:71px;" width="34" height="32" viewBox="0 0 34 32"><rect x="1" y="8.900" width="26.200" height="16.100" rx="2.200" fill="#666"/><rect x="6.200" y="0" width="15.800" height="12.700" fill="#f0f0f0"/><path d="M8.200 10.600V1.800H20V10.600" fill="none" stroke="#666" stroke-width="2"/><rect x="6.200" y="16.800" width="22" height="13.200" fill="#f0f0f0"/><path d="M21 18.800H8.200V27.900H21" fill="none" stroke="#666" stroke-width="2"/><path d="M29 15.300L19.500 24.400L24.500 24.600L23.300 30.200L32.700 21.600L27.500 21.400z" fill="#d9a05f" stroke="#f0f0f0" stroke-width="1" paint-order="stroke"/></svg>
<div class="t" style="left:130px;top:107.09px;letter-spacing:-0.01px;">Quick</div>
<div class="t" style="left:133.5px;top:121.09px;letter-spacing:-0.11px;">Print</div>
<svg class="a" style="left:174px;top:71px;" width="26" height="30" viewBox="0 0 26 30"><rect x="1.900" y="2" width="22.100" height="25.900" fill="#f0f0f0" stroke="#595959" stroke-width="2"/><path d="M8.100 3V27M17.900 3V27M3 7.600H23M3 22.300H23" stroke="#3a6ea5" stroke-width="1.800"/></svg>
<div class="t" style="left:175.1px;top:107.09px;letter-spacing:-0.30px;transform:scaleX(0.891);transform-origin:0 0;">Page</div>
<div class="t" style="left:168px;top:121.09px;letter-spacing:-0.42px;">Setup...</div>
<svg class="a" style="left:214px;top:71px;" width="30" height="30" viewBox="0 0 30 30"><rect x="2" y="2" width="25.900" height="25.900" fill="#f0f0f0" stroke="#595959" stroke-width="2"/><path d="M9.500 9.500L20.500 20.500" stroke="#3a6ea5" stroke-width="2.600" stroke-dasharray="6.500 2"/><path d="M5 5H13L5 12.400zM25 25.200V17.500L17 25.200z" fill="#3a6ea5"/></svg>
<div class="t" style="left:215px;top:107.09px;letter-spacing:-0.30px;transform:scaleX(0.961);transform-origin:0 0;">Scale</div>
<div class="a" style="left:262px;top:76.5px;width:10px;height:19.3px;background:#3a6ea5;border-radius:2px"></div>
<div class="t" style="left:261px;top:121.09px;">P</div>
<div class="t" style="left:32.5px;top:142.09px;letter-spacing:0.29px;color:#3a3a3a;">File</div>
<div class="t" style="left:155.5px;top:142.09px;letter-spacing:0.06px;color:#3a3a3a;">Print</div>
<div class="a" style="left:724px;top:67.5px;width:61px;height:67.5px;background:#b9b9b9"></div>
<svg class="a" style="left:726px;top:73px;" width="20" height="29" viewBox="0 0 20 29"><path d="M0 2H16.800V10.400M0 14.200H11L16.800 20.500V26.900H0" fill="none" stroke="#5e5e5e" stroke-width="1.500"/><path d="M11 14.200V20.500H16.800" fill="none" stroke="#5e5e5e" stroke-width="1.200"/></svg>
<div class="t" style="left:724px;top:107.09px;letter-spacing:-0.27px;color:#2a2a2a;">Continuous</div>
<div class="t" style="left:725.8px;top:121.09px;letter-spacing:0.03px;color:#2a2a2a;">olling</div>
<div class="t" style="left:789px;top:107.09px;color:#a8a8a8;">Sho</div>
<div class="t" style="left:724.5px;top:142.09px;letter-spacing:-0.20px;color:#3a3a3a;">View</div>
<div class="a" style="left:0px;top:158px;width:820px;height:1px;background:#bdbdbd"></div>
<div class="a" style="left:0px;top:159px;width:820px;height:480px;background:#f8f8f8"></div>
<div class="t" style="left:8.6px;top:169.71px;letter-spacing:0.04px;color:#9c9ca2;font-size:16px;">Navigation</div>
<svg class="a" style="left:257px;top:170px;" width="8" height="11" viewBox="0 0 8 11"><path d="M2 0.500H6M2.500 0.500V5.500M5.500 0.500V5.500M0.500 6H7.500M4 6V10" fill="none" stroke="#666" stroke-width="1"/></svg>
<div class="a" style="left:12px;top:203.7px;width:262px;height:20.6px;background:#fff;border:1px solid #ababab"></div>
<div class="t" style="left:17.8px;top:209.09px;letter-spacing:-0.21px;color:#9a9a9a;">Enter text to search...</div>
<svg class="a" style="left:259.5px;top:211px;" width="7" height="7" viewBox="0 0 7 7"><path d="M0.500 0.500L6.500 6.500M6.500 0.500L0.500 6.500" stroke="#333" stroke-width="1.200"/></svg>
<div class="t" style="left:12.4px;top:235.09px;letter-spacing:0.06px;font-weight:bold;color:#1467c8;">Document Map</div>
<div class="a" style="left:12px;top:251px;width:91px;height:3px;background:#1467c8"></div>
<div class="a" style="left:106px;top:232px;width:1px;height:22px;background:#dcdcdc"></div>
<div class="t" style="left:113.5px;top:235.09px;letter-spacing:-0.30px;transform:scaleX(0.932);transform-origin:0 0;">Pages</div>
<div class="a" style="left:153.5px;top:232px;width:1px;height:22px;background:#dcdcdc"></div>
<div class="t" style="left:159.8px;top:235.09px;letter-spacing:-0.42px;">Search Results</div>
<div class="a" style="left:15.6px;top:384.5px;width:270px;height:18.2px;background:#cce4f7"></div>
<div class="t" style="left:40px;top:268.09px;letter-spacing:-0.05px;color:#222;">PatternReport</div>
<svg class="a" style="left:23.3px;top:269.6px;" width="7" height="7" viewBox="0 0 7 7"><path d="M6.300 0.300V6.300H0.300z" fill="#444"/></svg>
<div class="t" style="left:59.8px;top:288.09px;letter-spacing:0.14px;color:#222;">V-Neck M</div>
<div class="t" style="left:59.8px;top:308.09px;letter-spacing:-0.21px;color:#222;">System Conversion</div>
<div class="t" style="left:59.8px;top:328.09px;letter-spacing:0.00px;color:#222;">Front V-Neck M_M</div>
<svg class="a" style="left:43.3px;top:329.4px;" width="7" height="7" viewBox="0 0 7 7"><path d="M6.300 0.300V6.300H0.300z" fill="#444"/></svg>
<div class="t" style="left:80px;top:348.09px;letter-spacing:-0.30px;transform:scaleX(0.872);transform-origin:0 0;color:#222;">YG</div>
<div class="t" style="left:80px;top:368.09px;letter-spacing:-0.18px;color:#222;">Yarn Feeding</div>
<div class="t" style="left:80px;top:388.09px;letter-spacing:0.07px;color:#222;">Take-down</div>
<svg class="a" style="left:63.3px;top:389.5px;" width="7" height="7" viewBox="0 0 7 7"><path d="M6.300 0.300V6.300H0.300z" fill="#444"/></svg>
<div class="t" style="left:100px;top:408.09px;letter-spacing:0.02px;color:#222;">Main Take-down (WMF)</div>
<div class="t" style="left:100px;top:428.09px;letter-spacing:-0.02px;color:#222;">Auxiliary Take-down (W+F)</div>
<div class="t" style="left:80px;top:448.09px;letter-spacing:-0.25px;color:#222;">Yarn Carriers</div>
<svg class="a" style="left:63.3px;top:449.5px;" width="7" height="7" viewBox="0 0 7 7"><path d="M6.300 0.300V6.300H0.300z" fill="#444"/></svg>
<div class="t" style="left:100px;top:468.09px;color:#222;">Yarn Carrier Staggering (YD)/(YDI)</div>
<div class="t" style="left:100px;top:488.09px;color:#222;">Yarn Carrier Correction (YC / YCI)</div>
<div class="t" style="left:100px;top:508.09px;letter-spacing:-0.18px;color:#222;">Plating Offset (YPI)</div>
<div class="t" style="left:100px;top:528.09px;letter-spacing:-0.27px;color:#222;">Yarn Carriers</div>
<div class="t" style="left:80px;top:548.09px;letter-spacing:-0.08px;color:#222;">Stitch Length</div>
<svg class="a" style="left:63.3px;top:549.5px;" width="7" height="7" viewBox="0 0 7 7"><path d="M6.300 0.300V6.300H0.300z" fill="#444"/></svg>
<div class="t" style="left:100px;top:568.09px;letter-spacing:-0.14px;color:#222;">Stitch Length (NP)</div>
<div class="t" style="left:100px;top:588.09px;letter-spacing:0.02px;color:#222;">Stitch Length with Needle Action</div>
<div class="t" style="left:80px;top:608.09px;letter-spacing:-0.30px;transform:scaleX(0.976);transform-origin:0 0;color:#222;">Speed</div>
<div class="a" style="left:274px;top:159px;width:2px;height:480px;background:#3a3a3a"></div>
<div class="a" style="left:276px;top:159px;width:600px;height:480px;background:#f6f6f6"></div>
<div class="a" style="left:300px;top:159px;width:1px;height:480px;background:#8e8e8e"></div>
<div class="a" style="left:301px;top:159px;width:600px;height:480px;background:#fff"></div>
<div class="a" style="left:723px;top:159px;width:100px;height:6px;background:#fbfbfb"></div>
<div class="a" style="left:723px;top:165px;width:100px;height:18.5px;background:#d9d9d9"></div>
<div class="a" style="left:723px;top:183px;width:100px;height:39px;background:#fff"></div>
<div class="a" style="left:723px;top:222px;width:100px;height:20.5px;background:#dcf7a6"></div>
<div class="a" style="left:737.5px;top:222px;width:1px;height:124.5px;background:#d0d0d0"></div>
<div class="a" style="left:781.5px;top:222px;width:1px;height:124.5px;background:#d0d0d0"></div>
<div class="a" style="left:723px;top:242.5px;width:100px;height:1px;background:#d0d0d0"></div>
<div class="a" style="left:723px;top:260px;width:100px;height:1px;background:#d0d0d0"></div>
<div class="a" style="left:723px;top:277.3px;width:100px;height:1px;background:#d0d0d0"></div>
<div class="a" style="left:723px;top:294.5px;width:100px;height:1px;background:#d0d0d0"></div>
<div class="a" style="left:723px;top:311.8px;width:100px;height:1px;background:#d0d0d0"></div>
<div class="a" style="left:723px;top:329px;width:100px;height:1px;background:#d0d0d0"></div>
<div class="a" style="left:723px;top:346.2px;width:100px;height:1px;background:#d0d0d0"></div>
<div class="t" style="left:749.3px;top:227.95px;letter-spacing:0.02px;color:#333;font-size:9.8px;">WMI</div>
<div class="t" style="left:793.2px;top:227.95px;color:#333;font-size:9.8px;">WM</div>
<div class="t" style="left:770.95px;top:245.95px;color:#222;font-size:9.8px;letter-spacing:0">3</div>
<div class="t" style="left:727.3px;top:245.95px;color:#222;font-size:9.8px;letter-spacing:0">0</div>
<div class="t" style="left:770.95px;top:262.95px;color:#222;font-size:9.8px;letter-spacing:0">0</div>
<div class="t" style="left:727.3px;top:262.95px;color:#222;font-size:9.8px;letter-spacing:0">0</div>
<div class="t" style="left:770.95px;top:279.95px;color:#222;font-size:9.8px;letter-spacing:0">0</div>
<div class="t" style="left:727.3px;top:279.95px;color:#222;font-size:9.8px;letter-spacing:0">0</div>
<div class="t" style="left:770.95px;top:296.95px;color:#222;font-size:9.8px;letter-spacing:0">3</div>
<div class="t" style="left:727.3px;top:296.95px;color:#222;font-size:9.8px;letter-spacing:0">0</div>
<div class="t" style="left:770.95px;top:313.95px;color:#222;font-size:9.8px;letter-spacing:0">0</div>
<div class="t" style="left:727.3px;top:313.95px;color:#222;font-size:9.8px;letter-spacing:0">0</div>
<div class="a" style="left:723px;top:437px;width:100px;height:1px;background:#1b76d2"></div>
<div class="a" style="left:723px;top:438px;width:100px;height:10.5px;background:#f5f5f5"></div>
<div class="a" style="left:723px;top:448.5px;width:100px;height:1px;background:#a8a8a8"></div>
<div class="a" style="left:724.5px;top:529.5px;width:100px;height:20.5px;background:#e1e2e4"></div>
<div class="t" style="left:776.9px;top:535.95px;color:#222;font-size:9.8px;letter-spacing:0">Descrip</div>
<div class="a" style="left:306.5px;top:550px;width:520px;height:1px;background:#d0d0d0"></div>
<div class="a" style="left:306.5px;top:567px;width:520px;height:1px;background:#d0d0d0"></div>
<div class="a" style="left:306.5px;top:584.7px;width:520px;height:1px;background:#d0d0d0"></div>
<div class="a" style="left:306.5px;top:602.2px;width:520px;height:1px;background:#d0d0d0"></div>
<div class="a" style="left:306.5px;top:619.5px;width:520px;height:1px;background:#d0d0d0"></div>
<div class="a" style="left:306px;top:536px;width:1px;height:83.5px;background:#d0d0d0"></div>
<div class="a" style="left:331px;top:536px;width:1px;height:83.5px;background:#d0d0d0"></div>
<div class="a" style="left:391px;top:536px;width:1px;height:83.5px;background:#d0d0d0"></div>
<div class="a" style="left:489px;top:536px;width:1px;height:83.5px;background:#d0d0d0"></div>
<div class="a" style="left:564.5px;top:536px;width:1px;height:83.5px;background:#d0d0d0"></div>
<div class="a" style="left:641px;top:536px;width:1px;height:83.5px;background:#d0d0d0"></div>
<div class="a" style="left:724px;top:536px;width:1px;height:83.5px;background:#d0d0d0"></div>
<div class="t" style="left:729.6px;top:553.12px;color:#222;font-size:9.6px;letter-spacing:0">Forward</div>
<div class="t" style="left:729.6px;top:570.12px;color:#222;font-size:9.6px;letter-spacing:0">Release</div>
<div class="t" style="left:729.6px;top:588.12px;color:#222;font-size:9.6px;letter-spacing:0">Binding-off</div>
<div class="t" style="left:729.6px;top:605.12px;color:#222;font-size:9.6px;letter-spacing:0">W+0</div>
<div class="a" style="left:313px;top:571px;width:12px;height:12px;background:#0b8a4a;border-radius:1px"></div>
<div class="a" style="left:313px;top:588.3px;width:12px;height:12px;background:#744f85;border-radius:1px"></div>
<div class="a" style="left:313px;top:605.7px;width:12px;height:11.5px;background:#ff0000;border-radius:1px"></div>
<div class="t" style="left:381.06px;top:588.12px;color:#222;font-size:9.6px;letter-spacing:0">5</div>
<div class="t" style="left:375.82px;top:605.12px;color:#222;font-size:9.6px;letter-spacing:0">50</div>
<div class="t" style="left:396px;top:605.12px;color:#222;font-size:9.6px;letter-spacing:0">Open</div>
<div class="t" style="left:554.76px;top:588.12px;color:#222;font-size:9.6px;letter-spacing:0">1</div>
<div class="t" style="left:631.76px;top:588.12px;color:#222;font-size:9.6px;letter-spacing:0">4</div>
<div class="t" style="left:709.32px;top:588.12px;color:#222;font-size:9.6px;letter-spacing:0">10</div>
</div></div>
<div id="dlg">
<div class="a" style="left:0;top:0;width:456px;height:29px;background:#f3f3f3"></div>
<svg class="a" style="left:9px;top:7px" width="15" height="14" viewBox="0 0 15 14"><use href="#logo"/></svg>
<div class="t" style="left:30px;top:8.09px;letter-spacing:-0.12px;">Pattern Report Dialog</div>
<svg class="a" style="left:336px;top:5px" width="110" height="18" viewBox="0 0 110 18"><path d="M3 8.5h10" stroke="#111" stroke-width="1.1" fill="none"/><rect x="48.5" y="3.5" width="9" height="9" rx="1" fill="none" stroke="#111" stroke-width="1.1"/><path d="M94.5 3.2l10 10M104.5 3.2l-10 10" stroke="#111" stroke-width="1.1" fill="none"/></svg>
<div class="a" style="left:18px;top:41px;width:421px;height:208px;border:1px solid #b4b4b4;border-radius:4px;background:#f0f0f0"></div>
<svg class="a" style="left:53px;top:53px" width="14" height="14"><use href="#cb"/></svg>
<div class="t" style="left:72.5px;top:54.09px;letter-spacing:-0.17px;">Select All</div>
<svg class="a" style="left:185px;top:52px" width="16" height="16" viewBox="0 0 16 16"><use href="#knit"/></svg>
<svg class="a" style="left:213px;top:52px" width="16" height="16" viewBox="0 0 16 16"><use href="#sinbox"/><text x="8" y="13" font-size="9.5" font-family="Liberation Sans, sans-serif" fill="#7d8c00" text-anchor="middle" font-weight="bold" textLength="12" lengthAdjust="spacingAndGlyphs">sin</text></svg>
<svg class="a" style="left:241px;top:53px" width="14" height="14"><use href="#cb"/></svg>
<div class="t" style="left:260.5px;top:54.09px;letter-spacing:-0.08px;">Extended Content</div>
<div class="a" style="left:29px;top:75px;width:398px;height:1px;background:#555"></div>
<div class="a" style="left:19px;top:86px;width:419px;height:76.5px;background:#d4d5d9"></div>
<div class="a" style="left:19px;top:173px;width:419px;height:54.5px;background:#d4d5d9"></div>
<svg class="a" style="left:28.899999999999977px;top:92px" width="9" height="6" viewBox="0 0 9 6"><path d="M4.150 0L8.300 4.900H0z" fill="#111"/></svg>
<svg class="a" style="left:28.899999999999977px;top:179px" width="9" height="6" viewBox="0 0 9 6"><path d="M4.150 0L8.300 4.900H0z" fill="#111"/></svg>
<svg class="a" style="left:53px;top:90px" width="14" height="14"><use href="#cb"/></svg>
<div class="t" style="left:72.5px;top:91.09px;letter-spacing:-0.05px;font-weight:bold;">Body</div>
<svg class="a" style="left:241px;top:90px" width="14" height="14"><use href="#cb"/></svg>
<div class="t" style="left:260.5px;top:91.09px;letter-spacing:-0.08px;">Extended Content</div>
<svg class="a" style="left:53px;top:113px" width="14" height="14"><use href="#cb"/></svg>
<div class="t" style="left:72.5px;top:114.09px;letter-spacing:0.06px;">Front V-Neck MM</div>
<svg class="a" style="left:241px;top:113px" width="14" height="14"><use href="#cb"/></svg>
<svg class="a" style="left:29px;top:112px" width="16" height="16" viewBox="0 0 16 16"><path d="M0 16V9L2 3L4 0H6L8 5L10 0H12L14 3L16 9V16z" fill="#fff"/></svg>
<svg class="a" style="left:186px;top:109px" width="19" height="19" viewBox="0 0 19 19"><use href="#knit" x="0" y="3" width="16" height="16"/><circle cx="12.1" cy="5.9" r="5.2" fill="#1aa86b"/><path d="M9.3 6L11.4 8.1L15 4" fill="none" stroke="#fff" stroke-width="1.6"/></svg>
<svg class="a" style="left:53px;top:135px" width="14" height="14"><use href="#cb"/></svg>
<div class="t" style="left:72.5px;top:136.09px;letter-spacing:-0.11px;">Rear V-Neck MM</div>
<svg class="a" style="left:241px;top:135px" width="14" height="14"><use href="#cb"/></svg>
<svg class="a" style="left:29px;top:134px" width="16" height="16" viewBox="0 0 16 16"><path d="M0 16V9L2 3Q3 0.3 5 0.3H11Q13 0.3 14 3L16 9V16z" fill="#fff"/></svg>
<svg class="a" style="left:186px;top:131px" width="19" height="19" viewBox="0 0 19 19"><use href="#knit" x="0" y="3" width="16" height="16"/><circle cx="12.1" cy="5.9" r="5.2" fill="#1aa86b"/><path d="M9.3 6L11.4 8.1L15 4" fill="none" stroke="#fff" stroke-width="1.6"/></svg>
<svg class="a" style="left:53px;top:177px" width="14" height="14"><use href="#cb"/></svg>
<div class="t" style="left:72.5px;top:178.09px;letter-spacing:-0.37px;font-weight:bold;">Sleeve</div>
<svg class="a" style="left:241px;top:177px" width="14" height="14"><use href="#cb"/></svg>
<div class="t" style="left:260.5px;top:178.09px;letter-spacing:-0.08px;">Extended Content</div>
<svg class="a" style="left:53px;top:200px" width="14" height="14"><use href="#cb"/></svg>
<div class="t" style="left:72.5px;top:201.09px;letter-spacing:-0.10px;">Sleeve V-Neck MM</div>
<svg class="a" style="left:241px;top:200px" width="14" height="14"><use href="#cb"/></svg>
<svg class="a" style="left:29px;top:199px" width="16" height="16" viewBox="0 0 16 16"><path d="M4.800 0H12.400L16.100 6L12.800 15.800H3.900L0 6z" fill="#fff"/></svg>
<svg class="a" style="left:186px;top:196px" width="19" height="19" viewBox="0 0 19 19"><use href="#knit" x="0" y="3" width="16" height="16"/><circle cx="12.1" cy="5.9" r="5.2" fill="#1aa86b"/><path d="M9.3 6L11.4 8.1L15 4" fill="none" stroke="#fff" stroke-width="1.6"/></svg>
<div class="t" style="left:18.5px;top:264.09px;letter-spacing:-0.14px;font-weight:bold;">Extended Content</div>
<div class="a" style="left:18px;top:281px;width:421px;height:292px;border:1px solid #b4b4b4;border-radius:4px;background:#d4d5d9"></div>
<svg class="a" style="left:53px;top:294px" width="14" height="14"><use href="#cb"/></svg>
<div class="t" style="left:72.5px;top:295.09px;letter-spacing:-0.17px;">Select All</div>
<svg class="a" style="left:161px;top:294px" width="14" height="14"><use href="#cb"/></svg>
<div class="t" style="left:180.5px;top:295.09px;letter-spacing:0.02px;">Including statistic</div>
<svg class="a" style="left:29px;top:323px" width="17" height="17" viewBox="0 0 17 17"><path d="M0.600 4.500V13.500H13.500V10" fill="none" stroke="#3c3c3c" stroke-width="1.200"/><path d="M0 3.500H7V6H0z" fill="#3c3c3c"/><path d="M6 1.500Q11 -1 16 1.500L12.500 8H10z" fill="#3c3c3c"/><circle cx="11.200" cy="3.200" r="1.500" fill="#e8e8e8"/></svg>
<svg class="a" style="left:53px;top:324px" width="14" height="14"><use href="#cb"/></svg>
<div class="t" style="left:72.5px;top:325.09px;letter-spacing:-0.30px;transform:scaleX(0.830);transform-origin:0 0;">YG</div>
<svg class="a" style="left:29px;top:345px" width="17" height="17" viewBox="0 0 17 17"><path d="M1 2.300Q7.600 -1 14.200 2.300L12 7.800H8L6.500 11H5.500z" fill="#3c3c3c"/><rect x="7" y="8.700" width="9" height="7" fill="#0f9a8a"/><path d="M8.300 10.200h2.700v1.400h-2.700zM12 10.200h2.700v1.400h-2.700zM8.300 12.700h2.700v1.400h-2.700zM12 12.700h2.700v1.400h-2.700z" fill="#d8efe9"/></svg>
<svg class="a" style="left:53px;top:346px" width="14" height="14"><use href="#cb"/></svg>
<div class="t" style="left:72.5px;top:347.09px;letter-spacing:-0.27px;">Yarn Feeding</div>
<svg class="a" style="left:29px;top:367px" width="17" height="17" viewBox="0 0 17 17"><circle cx="10" cy="5.200" r="3.100" fill="none" stroke="#3c3c3c" stroke-width="1"/><circle cx="10" cy="5.200" r="1.100" fill="#3c3c3c"/><circle cx="4.800" cy="12.300" r="2.200" fill="none" stroke="#3c3c3c" stroke-width="1"/><circle cx="4.800" cy="12.300" r=".8" fill="#3c3c3c"/><path d="M14.200 0.600Q16 6.500 12.300 9Q10 10.300 7.600 10.800M2.200 10.600Q0.300 13 1.300 16.200" fill="none" stroke="#3c3c3c" stroke-width="1.100"/></svg>
<svg class="a" style="left:53px;top:368px" width="14" height="14"><use href="#cb"/></svg>
<div class="t" style="left:72.5px;top:369.09px;letter-spacing:-0.13px;">Take-down</div>
<svg class="a" style="left:161px;top:368px" width="14" height="14"><use href="#cb"/></svg>
<svg class="a" style="left:29px;top:389px" width="17" height="17" viewBox="0 0 17 17"><circle cx="8.300" cy="0.800" r=".8" fill="#3c3c3c"/><path d="M0.600 4.300Q8.300 0.600 15.900 4.300L10.300 13.200L8.400 15.600L6.400 13.200z" fill="#3c3c3c"/><rect x="7.200" y="6.500" width="2.300" height="7.500" fill="#d4d5d9"/><path d="M8.350 7.500V16.300" stroke="#3c3c3c" stroke-width=".9"/></svg>
<svg class="a" style="left:53px;top:390px" width="14" height="14"><use href="#cb"/></svg>
<div class="t" style="left:72.5px;top:391.09px;letter-spacing:-0.39px;">Yarn Carriers</div>
<svg class="a" style="left:161px;top:390px" width="14" height="14"><use href="#cb"/></svg>
<svg class="a" style="left:29px;top:411px" width="17" height="17" viewBox="0 0 17 17"><path d="M3 14.500H5.200Q6.500 14.500 6.300 12.500L5.400 8.500Q4.800 4.500 8 4.500Q11.200 4.500 10.600 8.500L9.700 12.500Q9.500 14.500 10.800 14.500H13" fill="none" stroke="#3c3c3c" stroke-width="1.100"/></svg>
<svg class="a" style="left:53px;top:412px" width="14" height="14"><use href="#cb"/></svg>
<div class="t" style="left:72.5px;top:413.09px;letter-spacing:-0.09px;">Stitch Length</div>
<svg class="a" style="left:161px;top:412px" width="14" height="14"><use href="#cb"/></svg>
<svg class="a" style="left:29px;top:433px" width="17" height="17" viewBox="0 0 17 17"><path d="M0.600 11.500L3.400 1.400H13.200L16 11.500" fill="none" stroke="#3c3c3c" stroke-width="1.200"/><path d="M0.200 10.800L5.200 12.300L3.200 15.900zM16.300 10.800L11.300 12.300L13.300 15.900z" fill="#3c3c3c"/><path d="M3.700 11.200A4.900 5.200 0 0 1 13.300 11.200L11 12.600L7.200 6.300L5.900 12.600z" fill="#3c3c3c"/></svg>
<svg class="a" style="left:53px;top:434px" width="14" height="14"><use href="#cb"/></svg>
<div class="t" style="left:72.5px;top:435.09px;letter-spacing:-0.30px;transform:scaleX(0.976);transform-origin:0 0;">Speed</div>
<svg class="a" style="left:161px;top:434px" width="14" height="14"><use href="#cb"/></svg>
<svg class="a" style="left:29px;top:455px" width="17" height="17" viewBox="0 0 17 17"><rect x="1.700" y="3.900" width="4.400" height="8.300" fill="none" stroke="#3c3c3c" stroke-width="1.500"/><rect x="8.200" y="3.200" width="5.800" height="9.700" fill="#3c3c3c"/><path d="M14.300 4.300L9.800 8.300" stroke="#d4d5d9" stroke-width="1.100"/><rect x="10.600" y="9" width="1.100" height="4" fill="#d4d5d9"/></svg>
<svg class="a" style="left:53px;top:456px" width="14" height="14"><use href="#cb"/></svg>
<div class="t" style="left:72.5px;top:457.09px;letter-spacing:-0.26px;">Cycle Counters</div>
<svg class="a" style="left:161px;top:456px" width="14" height="14"><use href="#cb"/></svg>
<svg class="a" style="left:29px;top:477px" width="17" height="17" viewBox="0 0 17 17"><path d="M4 5.800H14" stroke="#d0202a" stroke-width="1.600"/><path d="M3 5.800L7 2.300V9.300zM15 5.800L11 2.300V9.300z" fill="#d0202a"/><rect x="0" y="11" width="16" height="3" fill="#3c3c3c"/></svg>
<svg class="a" style="left:53px;top:478px" width="14" height="14"><use href="#cb"/></svg>
<div class="t" style="left:72.5px;top:479.09px;letter-spacing:-0.35px;">Racking</div>
<svg class="a" style="left:161px;top:478px" width="14" height="14"><use href="#cb"/></svg>
<svg class="a" style="left:29px;top:499px" width="17" height="17" viewBox="0 0 17 17"><rect x="0" y="5.800" width="16" height="1.800" fill="#111"/><circle cx="8.200" cy="10.600" r="2.300" fill="none" stroke="#111" stroke-width="1.800"/></svg>
<svg class="a" style="left:53px;top:500px" width="14" height="14"><use href="#cb"/></svg>
<div class="t" style="left:72.5px;top:501.09px;letter-spacing:-0.16px;">Needle Data</div>
<svg class="a" style="left:161px;top:500px" width="14" height="14"><use href="#cb"/></svg>
<svg class="a" style="left:29px;top:521px" width="17" height="17" viewBox="0 0 17 17"><path d="M6.900 1.900h8.100v2h-8.100zM6.900 12h8.100v2h-8.100z" fill="#fba82a"/><path d="M1 5h8v2H1zM1 9h8v2H1z" fill="#1c9fe0"/></svg>
<svg class="a" style="left:53px;top:522px" width="14" height="14"><use href="#cb"/></svg>
<div class="t" style="left:72.5px;top:523.09px;letter-spacing:-0.30px;transform:scaleX(0.927);transform-origin:0 0;">CA</div>
<svg class="a" style="left:161px;top:522px" width="14" height="14"><use href="#cb"/></svg>
<svg class="a" style="left:29px;top:543px" width="17" height="17" viewBox="0 0 17 17"><use href="#ma"/></svg>
<svg class="a" style="left:53px;top:544px" width="14" height="14"><use href="#cb"/></svg>
<div class="t" style="left:72.5px;top:545.09px;letter-spacing:-0.05px;">MA</div>
<svg class="a" style="left:161px;top:544px" width="14" height="14"><use href="#cb"/></svg>
<div class="a" style="left:0;top:606px;width:456px;height:14px;background:#a9a9ad"></div>
<div class="a" style="left:70px;top:585px;width:158px;height:28px;background:#f6f6f6;border-radius:5px;box-shadow:0 0 0 0.5px #dedede"></div>
<div class="t" style="left:141.9px;top:594.09px;letter-spacing:-0.17px;">Ok</div>
<div class="a" style="left:240px;top:585px;width:158px;height:28px;background:#f6f6f6;border-radius:5px;box-shadow:0 0 0 0.5px #dedede"></div>
<div class="t" style="left:301.7px;top:594.09px;letter-spacing:-0.31px;">Cancel</div>
<svg class="a" style="left:442px;top:608px" width="12" height="12" viewBox="0 0 12 12"><path d="M10 1.5h1M10 4.5h1M7 4.5h1M10 7.5h1M7 7.5h1M4 7.5h1M10 10.5h1M7 10.5h1M4 10.5h1M1 10.5h1" stroke="#e4e4e4" stroke-width="1.4"/></svg>
</div>
<svg class="a" style="left:0;top:0;pointer-events:none" width="941" height="792" viewBox="0 0 941 792">
<g style="filter:drop-shadow(1px 2px 1.5px rgba(0,0,0,.4))">
<rect x="184.500" y="48.500" width="84" height="100.500" fill="none" stroke="#ef4347" stroke-width="3"/>
<path d="M269.500 118.700L396 188" stroke="#ef4347" stroke-width="3" fill="none"/>
<path d="M402 191.300L391.300 193.300L395.600 184z" fill="#ef4347"/>
<path d="M402.500 323L263 431.200" stroke="#ef4347" stroke-width="3" fill="none"/>
<path d="M257.300 435.700L262.300 425.600L268.400 433.300z" fill="#ef4347"/>
</g>

</svg>
</body></html>
